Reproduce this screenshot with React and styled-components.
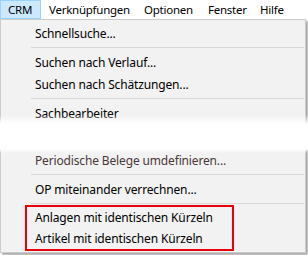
import React from 'react'
import styled, { createGlobalStyle } from 'styled-components'

const Global = createGlobalStyle`
    html, body {
        margin: 0;
        padding: 0;
        background: #ffffff;
    }
    body {
        font-family: "Noto Sans", "Open Sans", sans-serif;
        font-size: 12px;
        letter-spacing: -0.15px;
        color: #000;
    }
`

const Wrap = styled.div`
    width: 308px;
    height: 255px;
    overflow: hidden;
    background: #ffffff;
`

const MenuBar = styled.div`
    display: flex;
    height: 19px;
    background: #ffffff;
`

const BarItem = styled.div`
    display: flex;
    align-items: center;
    box-sizing: border-box;
    width: ${p => p.$w}px;
    flex: none;
    padding: 0 7px;
    font-size: 11.5px;
    letter-spacing: -0.25px;
    line-height: 17px;
    white-space: nowrap;
    border: 1px solid ${p => (p.$active ? '#99d1ff' : 'transparent')};
    background: ${p => (p.$active ? '#cce8ff' : 'transparent')};
`

const Dropdown = styled.div`
    width: 304px;
    border: 1px solid #cccccc;
    background: #f2f2f2;
    padding: 2px 0 1px;
    box-shadow: 2px 2px 2px rgba(0, 0, 0, 0.35);
`

const Item = styled.div`
    height: ${p => p.$h || 22}px;
    display: flex;
    align-items: center;
    padding-left: ${p => p.$pad || 34}px;
    color: ${p => (p.$faded ? '#4a3838' : '#000')};
    white-space: nowrap;
`

const Separator = styled.div`
    height: 1px;
    margin: 3px 1px 3px 30px;
    background: #d7d7d7;
`

const Hidden = styled.div`
    position: relative;
    height: 25px;
    margin: 0 -5px 0 -1px;
    background: #ffffff;

    &::before {
        content: '';
        position: absolute;
        left: 0;
        right: 0;
        top: -9px;
        height: 9px;
        background: linear-gradient(rgba(255, 255, 255, 0), #ffffff);
    }

    &::after {
        content: '';
        position: absolute;
        left: 0;
        right: 0;
        bottom: -4px;
        height: 4px;
        background: linear-gradient(#ffffff, rgba(255, 255, 255, 0));
    }
`

const Marked = styled.div`
    width: 205px;
    margin: -2px 0 0 24px;
    border: 2px solid #e8000b;
`

const App = () => {
  return (
    <Wrap>
      <Global />
      <MenuBar>
        <BarItem $active $w={41}>CRM</BarItem>
        <BarItem $w={95}>Verknüpfungen</BarItem>
        <BarItem $w={64}>Optionen</BarItem>
        <BarItem $w={52}>Fenster</BarItem>
        <BarItem $w={50}>Hilfe</BarItem>
      </MenuBar>
      <Dropdown>
        <Item>Schnellsuche...</Item>
        <Separator />
        <Item>Suchen nach Verlauf...</Item>
        <Item>Suchen nach Schätzungen...</Item>
        <Separator />
        <Item>Sachbearbeiter</Item>
        <Hidden />
        <Item $faded>Periodische Belege umdefinieren...</Item>
        <Separator />
        <Item>OP miteinander verrechnen...</Item>
        <Separator />
        <Marked>
          <Item $h={21} $pad={8}>Anlagen mit identischen Kürzeln</Item>
          <Item $h={21} $pad={8}>Artikel mit identischen Kürzeln</Item>
        </Marked>
      </Dropdown>
    </Wrap>
  )
}

export default App
